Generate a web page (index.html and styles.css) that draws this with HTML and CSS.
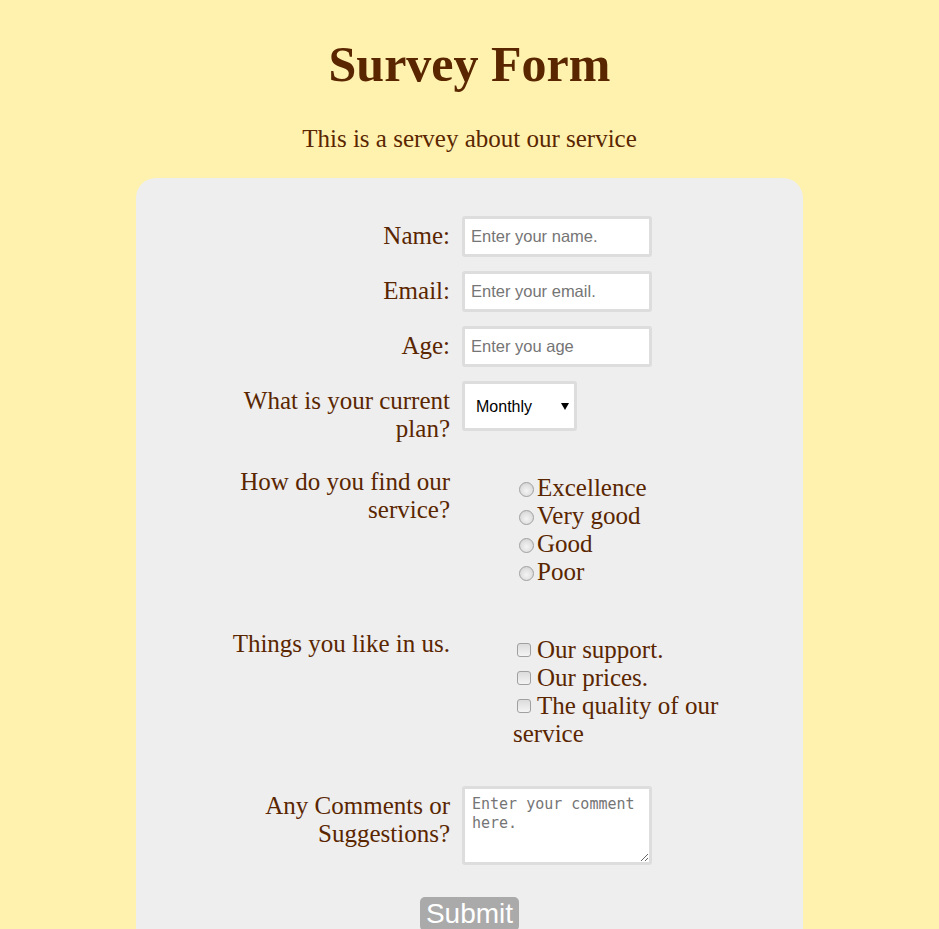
FILE: index.html
```html
<!DOCTYPE html>
<html lang="en">
<head>
<meta charset="utf-8">
<title>Survey Form</title>
<link rel="stylesheet" href="styles.css">
</head>
<body>
<header class="header">
  <h1 class="title">Survey Form</h1>
  <p class="description">This is a servey about our service</p>
</header>
<form class="survey">
  <div class="row">
    <label class="label" for="name">Name:</label>
    <div class="field"><input class="text-input" id="name" type="text" placeholder="Enter your name."></div>
  </div>
  <div class="row">
    <label class="label" for="email">Email:</label>
    <div class="field"><input class="text-input" id="email" type="email" placeholder="Enter your email."></div>
  </div>
  <div class="row">
    <label class="label" for="age">Age:</label>
    <div class="field"><input class="text-input" id="age" type="text" placeholder="Enter you age"></div>
  </div>
  <div class="row">
    <label class="label" for="plan">What is your current plan?</label>
    <div class="field">
      <span class="select-wrap">
        <select class="select" id="plan">
          <option>Monthly</option>
          <option>Yearly</option>
        </select>
      </span>
    </div>
  </div>
  <div class="row row-radio">
    <div class="label label-top">How do you find our service?</div>
    <div class="field list radio-list">
      <div class="option"><input class="radio" type="radio" name="rate">Excellence</div>
      <div class="option"><input class="radio" type="radio" name="rate">Very good</div>
      <div class="option"><input class="radio" type="radio" name="rate">Good</div>
      <div class="option"><input class="radio" type="radio" name="rate">Poor</div>
    </div>
  </div>
  <div class="row row-check">
    <div class="label label-top">Things you like in us.</div>
    <div class="field list check-list">
      <div class="option"><input class="check" type="checkbox">Our support.</div>
      <div class="option"><input class="check" type="checkbox">Our prices.</div>
      <div class="option"><input class="check" type="checkbox">The quality of our service</div>
    </div>
  </div>
  <div class="row row-comment">
    <label class="label" for="comment">Any Comments or Suggestions?</label>
    <div class="field"><textarea class="comment" id="comment" placeholder="Enter your comment here."></textarea></div>
  </div>
  <div class="actions">
    <button class="submit" type="submit">Submit</button>
  </div>
</form>
</body>
</html>
```
FILE: styles.css
```css
html, body {
  margin: 0;
  padding: 0;
}
body {
  background: #fff2ae;
  color: #5a2600;
  font-family: "Liberation Serif", "Times New Roman", serif;
  font-size: 25px;
  line-height: 28px;
  overflow: hidden;
}
.header {
  text-align: center;
  padding-top: 36px;
}
.title {
  margin: 0;
  font-size: 50px;
  line-height: 57px;
  font-weight: bold;
}
.description {
  margin: 32px 0 0;
}
.survey {
  width: 667px;
  margin: 25px auto 0;
  background: #eeeeee;
  border-radius: 20px;
  padding: 38px 0 40px;
  box-sizing: border-box;
}
.row {
  display: flex;
  align-items: flex-start;
  margin-bottom: 14px;
}
.label {
  width: 326px;
  flex: none;
  box-sizing: border-box;
  padding: 6px 12px 0 80px;
  text-align: right;
}
.label-top {
  padding-top: 0;
}
.field {
  flex: none;
}
.text-input {
  display: block;
  width: 190px;
  height: 41px;
  box-sizing: border-box;
  border: 3px solid #dddddd;
  border-radius: 3px;
  padding: 0 7px 0 6px;
  margin: 0;
  background: #fff;
  font-family: "Liberation Sans", Arial, sans-serif;
  font-size: 16.5px;
  color: #333;
  outline: none;
}
.text-input::placeholder,
.comment::placeholder {
  color: #757575;
}
.select-wrap {
  position: relative;
  display: block;
  width: 115px;
  height: 50px;
}
.select-wrap::after {
  content: "";
  position: absolute;
  right: 8px;
  top: 22px;
  border-left: 4px solid transparent;
  border-right: 4px solid transparent;
  border-top: 7px solid #000;
  pointer-events: none;
}
.select {
  appearance: none;
  -webkit-appearance: none;
  display: block;
  width: 115px;
  height: 50px;
  box-sizing: border-box;
  border: 3px solid #dddddd;
  border-radius: 3px;
  padding: 0 0 0 11px;
  margin: 0;
  background: #fff;
  font-family: "Liberation Sans", Arial, sans-serif;
  font-size: 16px;
  color: #000;
  outline: none;
}
.row-radio {
  margin-top: 25px;
  margin-bottom: 0;
}
.row-check {
  margin-top: 44px;
  margin-bottom: 0;
}
.row-comment {
  margin-top: 38px;
  margin-bottom: 0;
}
.list {
  width: 240px;
  padding-left: 51px;
  margin-top: 6px;
}
.option {
  line-height: 28px;
}
.radio {
  appearance: none;
  -webkit-appearance: none;
  display: inline-block;
  width: 15px;
  height: 15px;
  box-sizing: border-box;
  margin: 0 3px 0 6px;
  border: 1px solid #a0a0a0;
  border-radius: 50%;
  background: radial-gradient(circle at 50% 60%, #f4f4f4 0%, #e0e0e0 55%, #cccccc 100%);
  vertical-align: baseline;
  position: relative;
  top: 1px;
}
.check {
  appearance: none;
  -webkit-appearance: none;
  display: inline-block;
  width: 14px;
  height: 14px;
  box-sizing: border-box;
  margin: 0 6px 0 4px;
  border: 1px solid #a0a0a0;
  border-radius: 3px;
  background: linear-gradient(#dcdcdc, #f4f4f4);
  vertical-align: baseline;
  position: relative;
  top: -1px;
}
.comment {
  display: block;
  width: 190px;
  height: 79px;
  box-sizing: border-box;
  border: 3px solid #dddddd;
  border-radius: 3px;
  padding: 6px 7px;
  margin: 0;
  background: #fff;
  font-family: "DejaVu Sans Mono", "Liberation Mono", monospace;
  font-size: 15px;
  line-height: 19px;
  color: #333;
  outline: none;
}
.actions {
  text-align: center;
  margin-top: 32px;
}
.submit {
  background: #aaaaaa;
  color: #fff;
  border: none;
  border-radius: 5px;
  padding: 0 6px;
  font-family: "Liberation Sans", Arial, sans-serif;
  font-size: 28px;
  line-height: 34px;
  margin: 0;
  cursor: pointer;
}
```
